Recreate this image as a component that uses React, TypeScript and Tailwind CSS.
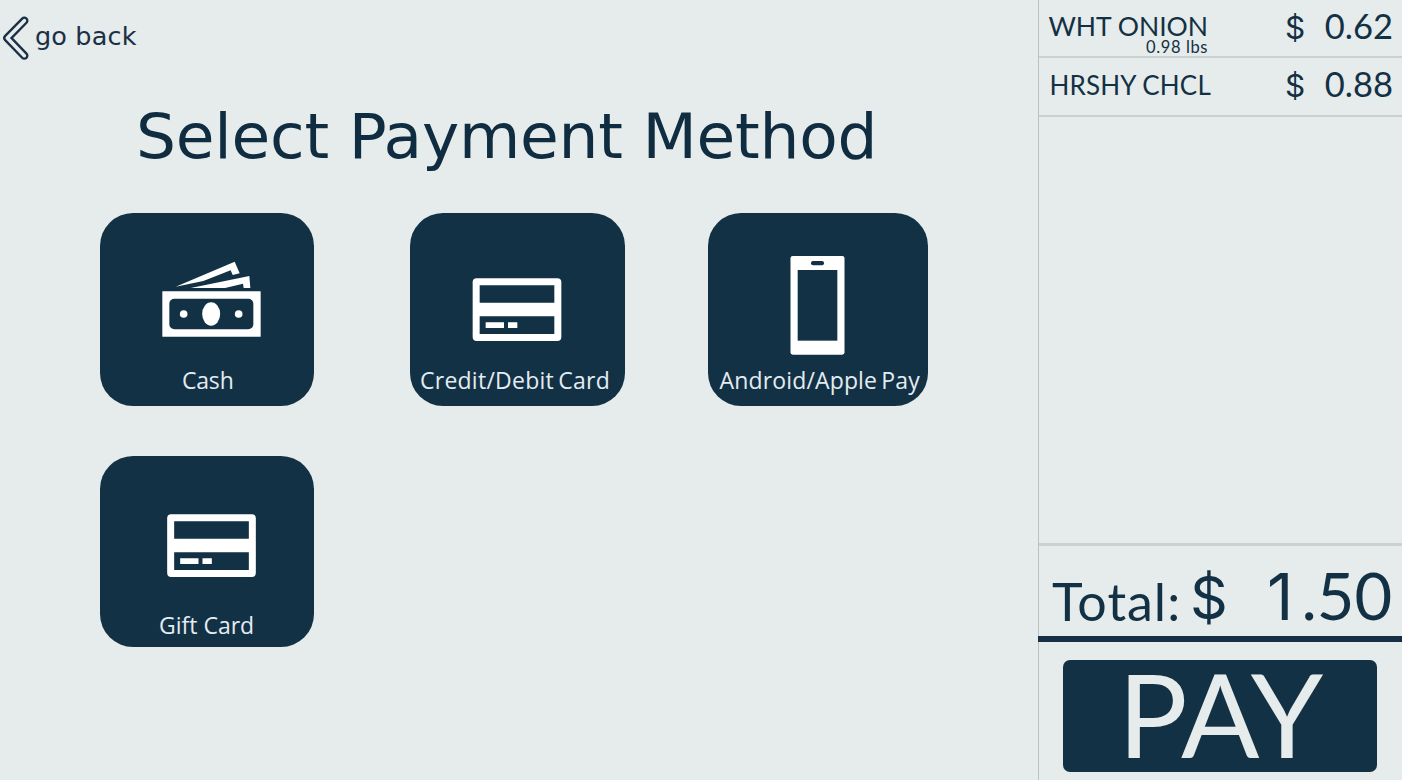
import type { ReactNode } from "react";

function BackIcon() {
  return (
    <svg className="h-[46px] w-[30px]" viewBox="0 45 90 138" fill="none" strokeLinecap="round" strokeLinejoin="round">
      <path d="M73 62 22 114 73 167" stroke="#1b2f45" strokeWidth="25" />
      <path d="M73 62 22 114 73 167" stroke="#e6ebeb" strokeWidth="11" />
    </svg>
  );
}

function CashIcon() {
  return (
    <svg className="h-[155px] w-[214px]" viewBox="30 39 642 465">
      <g fill="#fff">
        <path d="M257 260 434 185 449 220 428 225 422 211 340 243Z" />
        <path d="M302 264 478 228 481 264 461 264 459 251 405 264Z" />
        <path d="M217 274H512V410H217Z" />
        <rect x="238" y="296" width="252" height="92" rx="15" fill="#133144" />
        <ellipse cx="363.5" cy="342" rx="27" ry="35" />
        <circle cx="281" cy="342" r="11.5" />
        <circle cx="446" cy="342" r="11.5" />
      </g>
    </svg>
  );
}

function CardShape() {
  return (
    <>
      <rect x="217" y="235" width="266" height="188" rx="12" fill="#fff" />
      <path d="M238 256H462V308H238ZM238 349H462V402H238Z" fill="#133144" />
      <path d="M256 367H311V384H256ZM323 367H351V384H323Z" fill="#fff" />
    </>
  );
}

function CreditCardIcon() {
  return (
    <svg className="h-[155px] w-[216px]" viewBox="29 39 648 465">
      <CardShape />
    </svg>
  );
}

function GiftCardIcon() {
  return (
    <svg className="h-[157px] w-[214px]" viewBox="15.5 60 642 471">
      <CardShape />
    </svg>
  );
}

function PhoneIcon() {
  return (
    <svg className="h-[155px] w-[220px]" viewBox="24 39 660 465">
      <rect x="271.5" y="168" width="162" height="296" rx="7" fill="#fff" />
      <rect x="293" y="210" width="119" height="212" fill="#133144" />
      <rect x="333" y="183" width="39" height="13" rx="6" fill="#133144" />
    </svg>
  );
}

function Tile({ icon, label, className, labelClass }: { icon: ReactNode; label: string; className: string; labelClass: string }) {
  return (
    <button className={`flex flex-col items-start rounded-[33px] bg-[#133144] ${className}`}>
      {icon}
      <span className={`mt-px whitespace-nowrap font-['Open_Sans',sans-serif] text-[23px] leading-[23px] font-[480] text-[#e4ecf2] ${labelClass}`}>
        {label}
      </span>
    </button>
  );
}

function Price({ amount }: { amount: string }) {
  return (
    <span className="flex w-[107px] justify-between text-[34.5px] leading-[35px]">
      <span className="-ml-px mt-[2px] font-['Inter',sans-serif] text-[31.5px]">$</span>
      <span>{amount}</span>
    </span>
  );
}

export default function App() {
  return (
    <div className="flex h-[780px] w-[1402px] overflow-hidden bg-[#e6ebeb] text-[#133144]">
      <main className="w-[1038px] shrink-0">
        <button className="flex h-[61px] items-start pt-[15px] font-['DejaVu_Sans',sans-serif] text-[25.5px] leading-[26px] text-[#1b2f45]">
          <BackIcon />
          <span className="pt-[8px] pl-[5px] tracking-[0.15px]">go back</span>
        </button>
        <h1 className="mt-[44px] pl-[136px] font-['DejaVu_Sans',sans-serif] text-[63px] leading-[64px] tracking-[-0.25px] text-[#0f2c40]">
          Select Payment Method
        </h1>
        <div className="mt-[44px] grid grid-cols-[310px_298px_220px] gap-y-[50.5px] pl-[100px]">
          <Tile icon={<CashIcon />} label="Cash" className="h-[192.5px] w-[214px]" labelClass="pl-[82px] tracking-[-0.2px]" />
          <Tile icon={<CreditCardIcon />} label="Credit/Debit Card" className="-ml-[0.5px] h-[192.5px] w-[215.5px]" labelClass="pl-[10.5px] tracking-[0.25px] [word-spacing:-2px]" />
          <Tile icon={<PhoneIcon />} label="Android/Apple Pay" className="h-[192.5px] w-[220px]" labelClass="pl-[11.5px] tracking-[0.15px] [word-spacing:-2px]" />
          <Tile icon={<GiftCardIcon />} label="Gift Card" className="h-[191px] w-[214px]" labelClass="pl-[59px]" />
        </div>
      </main>

      <aside className="flex w-[364px] flex-col border-l border-[#bcc1c2] font-['Lato',sans-serif]">
        <div className="flex h-[58px] justify-between border-b-2 border-[#cbd0d1] pr-[9px] pl-[11px]">
          <div className="flex w-[158px] flex-col items-end">
            <span className="mt-[13px] whitespace-nowrap text-[26.5px] leading-[26px]">WHT ONION</span>
            <span className="whitespace-nowrap text-[16.5px] leading-[16px] tracking-[0.6px]">0.98 lbs</span>
          </div>
          <div className="pt-[8px]"><Price amount="0.62" /></div>
        </div>
        <div className="flex h-[59px] justify-between border-b-2 border-[#cbd0d1] pr-[9px] pl-[10.5px]">
          <span className="mt-[14px] whitespace-nowrap text-[26px] leading-[26px] tracking-[0.15px]">HRSHY CHCL</span>
          <div className="pt-[8px]"><Price amount="0.88" /></div>
        </div>
        <div className="h-[429px] border-b-[3px] border-[#cbd0d1]" />
        <div className="flex h-[90px] items-start pt-[17px] pl-[13px]">
          <span className="mt-[5px] w-[139px] whitespace-nowrap text-[52px] leading-[66px] tracking-[1px]">Total:</span>
          <span className="mt-[2px] -ml-px w-[77px] font-['Inter',sans-serif] text-[59px] leading-[66px]">$</span>
          <span className="-mt-px text-[65px] leading-[66px]">
            <span className="font-['Inter',sans-serif] tracking-[8px]">1</span>
            <span>.50</span>
          </span>
        </div>
        <div className="-ml-px h-[6px] bg-[#162f45]" />
        <button className="mt-[18px] ml-[24px] flex h-[112px] w-[314px] items-center rounded-[7px] bg-[#133144] pl-[55px] text-[116px] leading-[112px] tracking-[-0.8px] text-[#e6ebeb]">
          <span className="-mt-[4px]">PAY</span>
        </button>
      </aside>
    </div>
  );
}
